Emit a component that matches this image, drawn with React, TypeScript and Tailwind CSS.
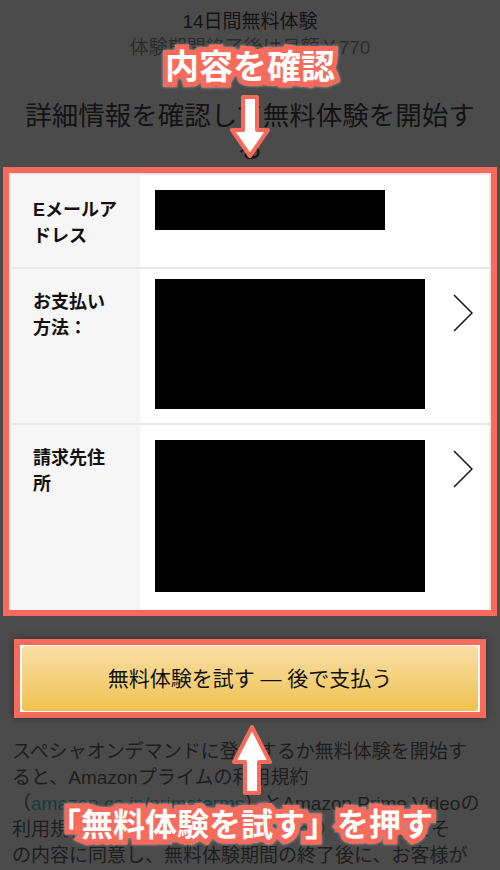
import React from "react";

const SALMON = "#f86b5c";

function Chevron() {
  return (
    <svg width="20" height="38" viewBox="0 0 20 38" className="mt-[25px] shrink-0">
      <polyline points="1,1 19,19 1,37" fill="none" stroke="#111" strokeWidth="1.5" />
    </svg>
  );
}

function Callout({ text, className }: { text: string; className: string }) {
  return (
    <div className={`grid font-bold leading-none whitespace-nowrap ${className}`}>
      <span className="[grid-area:1/1] text-[#f86b5c] [-webkit-text-stroke:10px_#f86b5c] [filter:drop-shadow(0_0_1.5px_rgba(255,255,255,0.55))]">
        {text}
      </span>
      <span className="relative [grid-area:1/1] text-white">{text}</span>
    </div>
  );
}

function Row({
  label,
  children,
  className,
  labelClass = "pt-5",
}: {
  label: React.ReactNode;
  children: React.ReactNode;
  className: string;
  labelClass?: string;
}) {
  return (
    <div className={`grid grid-cols-[129px_1fr] ${className}`}>
      <div className={`bg-[#f6f6f6] pl-[22px] text-[18px] font-bold leading-[26px] text-[#111] ${labelClass}`}>
        {label}
      </div>
      <div className="flex justify-between bg-white pl-[15px] pr-[16px]">{children}</div>
    </div>
  );
}

export default function App() {
  return (
    <div
      className="relative h-[870px] w-[500px] overflow-hidden bg-[#4b4b4b]"
      style={{ fontFamily: '"Liberation Sans", "Noto Sans CJK JP", sans-serif' }}
    >
      {/* header */}
      <div className="pt-[9px] text-center text-[19px] leading-[26px]">
        <p className="text-[#141414]">14日間無料体験</p>
        <p className="text-[#2c2c2c]">体験期間終了後は月額￥770</p>
      </div>
      <h1 className="mt-[39px] text-center text-[26.5px] leading-[33px] text-[#141414]">
        詳細情報を確認して無料体験を開始す
        <br />る
      </h1>

      {/* details table, highlighted */}
      <div className="mx-[3px] mt-px border-[6px] border-[#f86b5c]">
        <div className="border-x-2 border-t-2 border-[#e8e8e8]">
          <Row className="h-[92px]" labelClass="pt-[22px]" label={<>Eメールア<br />ドレス</>}>
            <div className="mt-[15px] h-[40px] w-[230px] bg-black" />
          </Row>
          <Row className="h-[156px] border-t-2 border-[#e8e8e8]" label={<>お支払い<br />方法：</>}>
            <div className="mt-[10px] h-[130px] w-[270px] bg-black" />
            <Chevron />
          </Row>
          <Row className="h-[187px] border-t-2 border-[#e8e8e8]" label={<>請求先住<br />所</>}>
            <div className="mt-[15px] h-[152px] w-[270px] bg-black" />
            <Chevron />
          </Row>
        </div>
      </div>

      {/* button, highlighted */}
      <div className="mx-[14px] mt-[23px] border-[6px] border-[#f86b5c] bg-white px-[2px] py-px shadow-[0_0_8px_rgba(0,0,0,0.35)]">
        <div className="flex h-[65px] items-center justify-center rounded-[3px] bg-linear-to-b from-[#f7dfa5] to-[#f0c14b] text-[21px] text-[#111]">
          無料体験を試す — 後で支払う
        </div>
      </div>

      {/* legal text (dimmed) */}
      <div className="mt-[21px] pl-[12px] text-[19px] leading-[26px] whitespace-nowrap text-[#1e1e1e]">
        <p>スペシャオンデマンドに登録するか無料体験を開始す</p>
        <p>ると、Amazonプライムの利用規約</p>
        <p>
          （<span className="text-[#163a40]">amazon.co.jp/primeterms</span>）とAmazon Prime Videoの
        </p>
        <p>
          利用規約（<span className="text-[#163a40]">amazon.co.jp/videoterms</span>）を承諾してそ
        </p>
        <p>の内容に同意し、無料体験期間の終了後に、お客様が</p>
      </div>

      {/* annotations */}
      <Callout text="内容を確認" className="absolute left-0 right-0 top-[50px] justify-center text-[34px]" />
      <svg className="absolute left-[226px] top-[92px]" width="48" height="70" viewBox="0 0 48 70">
        <polygon
          points="17,5 31,5 31,38 42,38 24,64 6,38 17,38"
          fill="#fff"
          stroke={SALMON}
          strokeWidth="4"
          strokeLinejoin="round"
        />
      </svg>
      <svg className="absolute left-[228px] top-[722px]" width="48" height="76" viewBox="0 0 48 76">
        <polygon
          points="24,5 42,40 31,40 31,71 17,71 17,40 6,40"
          fill="#fff"
          stroke={SALMON}
          strokeWidth="4"
          strokeLinejoin="round"
        />
      </svg>
      <Callout
        text="「無料体験を試す」を押す"
        className="absolute left-0 right-0 top-[809px] justify-center pr-[18px] text-[32px]"
      />
    </div>
  );
}
